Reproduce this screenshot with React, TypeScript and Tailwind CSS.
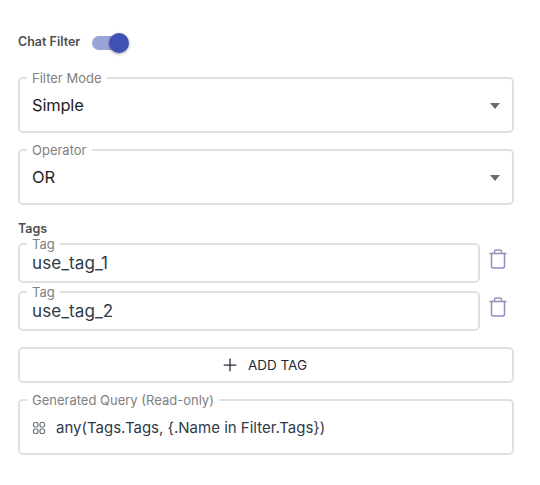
import { Plus } from "lucide-react";
import type { ReactNode } from "react";

function Field({ label, height, children }: { label: string; height: string; children: ReactNode }) {
  return (
    <div className={`relative flex flex-1 items-center rounded-[5px] border-2 border-[#e0e0e0] px-[12px] pt-[2px] ${height}`}>
      <span className="absolute -top-[9px] left-[7px] bg-white px-[5px] text-[13px] leading-[16px] text-[#808080]">{label}</span>
      {children}
    </div>
  );
}

function Caret() {
  return <span className="ml-auto h-0 w-0 border-x-[5.5px] border-t-[6px] border-x-transparent border-t-[#6b6b6b]" />;
}

function TrashIcon() {
  return (
    <svg width="18" height="20" viewBox="0 0 18 20" fill="none" stroke="#8f8fbd" strokeWidth="1.5" strokeLinecap="round" strokeLinejoin="round">
      <path d="M1 4.5h16" />
      <path d="M5.5 4.5V2.5a1.5 1.5 0 0 1 1.5-1.5h4a1.5 1.5 0 0 1 1.5 1.5v2" />
      <path d="M2.5 4.5V17a2 2 0 0 0 2 2h9a2 2 0 0 0 2-2V4.5" />
    </svg>
  );
}

function TagRow({ value }: { value: string }) {
  return (
    <div className="flex items-center">
      <Field label="Tag" height="h-[40px]">
        <span className="text-[17px] tracking-[0.1px] text-[#2f3a4a]">{value}</span>
      </Field>
      <div className="-mt-[8px] flex w-[34px] justify-end pr-[7px]">
        <TrashIcon />
      </div>
    </div>
  );
}

export default function App() {
  return (
    <div className="h-[485px] w-[540px] bg-white pl-[18px] pr-[26px] pt-[30px] font-['Inter',sans-serif]">
      <div className="flex h-[25px] items-center">
        <span className="text-[12.5px] font-semibold text-[#4f4f4f]">Chat Filter</span>
        <div className="relative ml-[12px] h-[14px] w-[34px] rounded-full bg-[#9ba4d9]">
          <span className="absolute -right-[3px] -top-[3px] h-[20px] w-[20px] rounded-full bg-[#3f51b5] shadow-[0_1px_3px_rgba(0,0,0,0.4)]" />
        </div>
      </div>

      <div className="mt-[22px] flex">
        <Field label="Filter Mode" height="h-[56px]">
          <span className="-mt-[2px] text-[16.5px] tracking-[-0.2px] text-[#1f1f1f]">Simple</span>
          <Caret />
        </Field>
      </div>

      <div className="mt-[16px] flex">
        <Field label="Operator" height="h-[56px]">
          <span className="-mt-[2px] text-[16.5px] tracking-[-0.2px] text-[#1f1f1f]">OR</span>
          <Caret />
        </Field>
      </div>

      <div className="mt-[16px] text-[12.5px] font-semibold leading-[16px] text-[#4f4f4f]">Tags</div>

      <div className="mt-[6px] flex flex-col gap-[8px]">
        <TagRow value="use_tag_1" />
        <TagRow value="use_tag_2" />
      </div>

      <button className="mt-[16px] flex h-[36px] w-full items-center justify-center gap-[8px] rounded-[5px] border-2 border-[#e0e0e0] pr-[5px] text-[13.5px] font-normal text-[#1f2937]">
        <Plus size={20} strokeWidth={1.5} />
        ADD TAG
      </button>

      <div className="mt-[16px] flex">
        <Field label="Generated Query (Read-only)" height="h-[56px]">
          <svg width="14" height="14" viewBox="0 0 14 14" fill="none" stroke="#6b7280" strokeWidth="1.2" className="mr-[10px] shrink-0">
            <rect x="1.5" y="1.5" width="4.5" height="4.5" rx="1.4" />
            <rect x="8" y="1.5" width="4.5" height="4.5" rx="1.4" />
            <rect x="1.5" y="8" width="4.5" height="4.5" rx="1.4" />
            <rect x="8" y="8" width="4.5" height="4.5" rx="1.4" />
          </svg>
          <span className="text-[15px] text-[#2f3a4a]">any(Tags.Tags, {"{"}.Name in Filter.Tags{"}"})</span>
        </Field>
      </div>
    </div>
  );
}
